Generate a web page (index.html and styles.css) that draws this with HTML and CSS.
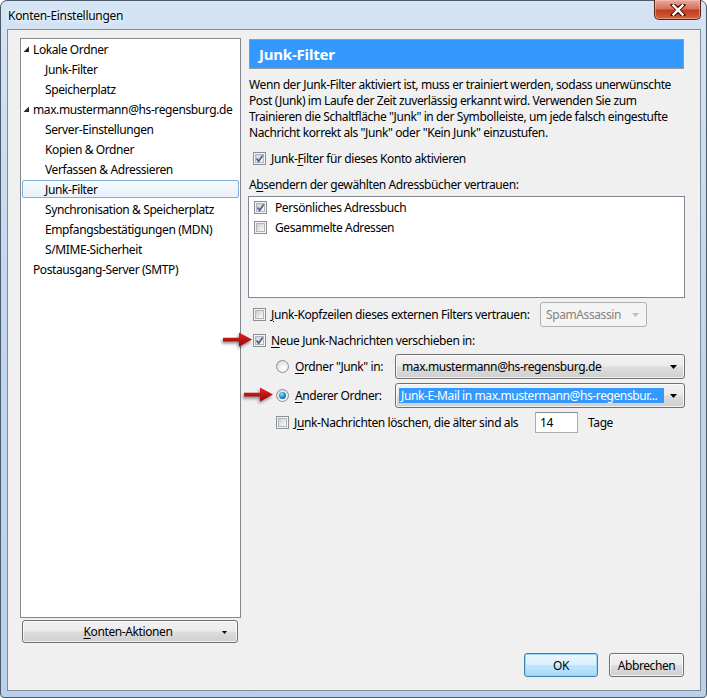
FILE: index.html
```html
<!DOCTYPE html>
<html lang="de">
<head>
<meta charset="utf-8">
<title>Konten-Einstellungen</title>
<link rel="stylesheet" href="styles.css">
</head>
<body>
<div class="window">
  <div class="titlebar">
    <span class="title">Konten-Einstellungen</span>
    <div class="close-btn">
      <svg width="16" height="12" viewBox="0 0 16 12"><path d="M3 1 L8 5 L13 1 M3 11 L8 7 L13 11 M3 1 L13 11 M13 1 L3 11" stroke="#4a1408" stroke-width="4.2" stroke-linecap="square" fill="none"/><path d="M3.5 1.5 L12.5 10.5 M12.5 1.5 L3.5 10.5" stroke="#ffffff" stroke-width="2.4" stroke-linecap="square" fill="none"/></svg>
    </div>
  </div>
  <div class="client">
    <div class="main">
      <div class="left">
        <div class="tree">
          <div class="trow top"><svg class="twisty" width="7" height="7" viewBox="0 0 7 7"><polygon points="6,0.5 6,6 0.5,6" fill="#262626"/></svg>Lokale Ordner</div>
          <div class="trow child">Junk-Filter</div>
          <div class="trow child">Speicherplatz</div>
          <div class="trow top"><svg class="twisty" width="7" height="7" viewBox="0 0 7 7"><polygon points="6,0.5 6,6 0.5,6" fill="#262626"/></svg>max.mustermann@hs-regensburg.de</div>
          <div class="trow child">Server-Einstellungen</div>
          <div class="trow child">Kopien &amp; Ordner</div>
          <div class="trow child">Verfassen &amp; Adressieren</div>
          <div class="trow child selected"><span class="sel-box">Junk-Filter</span></div>
          <div class="trow child">Synchronisation &amp; Speicherplatz</div>
          <div class="trow child">Empfangsbestätigungen (MDN)</div>
          <div class="trow child">S/MIME-Sicherheit</div>
          <div class="trow top">Postausgang-Server (SMTP)</div>
        </div>
        <div class="btn actions"><span class="btn-label"><u>K</u>onten-Aktionen</span><svg class="small-arrow" width="5" height="3" viewBox="0 0 5 3"><polygon points="0,0 5,0 2.5,3" fill="#000"/></svg></div>
      </div>
      <div class="right">
        <div class="header">Junk-Filter</div>
        <p class="desc">Wenn der Junk-Filter aktiviert ist, muss er trainiert werden, sodass unerwünschte<br>Post (Junk) im Laufe der Zeit zuverlässig erkannt wird. Verwenden Sie zum<br>Trainieren die Schaltfläche "Junk" in der Symbolleiste, um jede falsch eingestufte<br>Nachricht korrekt als "Junk" oder "Kein Junk" einzustufen.</p>
        <div class="row r-enable">
          <span class="cb checked"><svg viewBox="0 0 13 13" width="13" height="13"><path d="M3.6 6.6 L5.6 9.3 L9.6 3.4" stroke="#4b5f93" stroke-width="1.7" fill="none"/></svg></span>
          <span class="lbl">Junk-<u>F</u>ilter für dieses Konto aktivieren</span>
        </div>
        <div class="row r-label">A<u>b</u>sendern der gewählten Adressbücher vertrauen:</div>
        <div class="listbox">
          <div class="litem">
            <span class="cb checked"><svg viewBox="0 0 13 13" width="13" height="13"><path d="M3.6 6.6 L5.6 9.3 L9.6 3.4" stroke="#4b5f93" stroke-width="1.7" fill="none"/></svg></span>
            <span class="lbl">Persönliches Adressbuch</span>
          </div>
          <div class="litem">
            <span class="cb"></span>
            <span class="lbl">Gesammelte Adressen</span>
          </div>
        </div>
        <div class="row r-headers">
          <span class="cb"></span>
          <span class="lbl hdr"><u>J</u>unk-Kopfzeilen dieses externen Filters vertrauen:</span>
          <div class="combo disabled spam"><span class="combo-text">SpamAssassin</span><svg class="combo-arrow" width="7" height="4" viewBox="0 0 7 4"><polygon points="0,0 7,0 3.5,4" fill="#c0c0c0"/></svg></div>
        </div>
        <div class="row r-move">
          <span class="cb checked"><svg viewBox="0 0 13 13" width="13" height="13"><path d="M3.6 6.6 L5.6 9.3 L9.6 3.4" stroke="#4b5f93" stroke-width="1.7" fill="none"/></svg></span>
          <span class="lbl"><u>N</u>eue Junk-Nachrichten verschieben in:</span>
          <svg class="red-arrow arrow1" width="32" height="18" viewBox="0 0 32 18"><defs><linearGradient id="ra" x1="0" y1="0" x2="0" y2="1"><stop offset="0" stop-color="#e42424"/><stop offset="1" stop-color="#940505"/></linearGradient></defs><path d="M1 6.8 L17 6.8 L17 1.5 L30 8.5 L17 15.5 L17 10.4 L1 10.4 Z" fill="url(#ra)"/></svg>
        </div>
        <div class="row r-radio">
          <span class="radio"></span>
          <span class="rlbl"><u>O</u>rdner "Junk" in:</span>
          <div class="combo wide"><span class="combo-text">max.mustermann@hs-regensburg.de</span><svg class="combo-arrow" width="7" height="4" viewBox="0 0 7 4"><polygon points="0,0 7,0 3.5,4" fill="#000"/></svg></div>
        </div>
        <div class="row r-radio">
          <span class="radio on"><span class="dot"></span></span>
          <span class="rlbl"><u>A</u>nderer Ordner:</span>
          <div class="combo wide"><span class="combo-text hl">Junk-E-Mail in max.mustermann@hs-regensbur...</span><svg class="combo-arrow" width="7" height="4" viewBox="0 0 7 4"><polygon points="0,0 7,0 3.5,4" fill="#000"/></svg></div>
          <svg class="red-arrow arrow2" width="32" height="18" viewBox="0 0 32 18"><path d="M1 6.8 L17 6.8 L17 1.5 L30 8.5 L17 15.5 L17 10.4 L1 10.4 Z" fill="url(#ra)"/></svg>
        </div>
        <div class="row r-delete">
          <span class="cb"></span>
          <span class="lbl dl">J<u>u</u>nk-Nachrichten löschen, die älter sind als</span>
          <span class="numbox">14</span>
          <span class="tage">Tage</span>
        </div>
      </div>
    </div>
    <div class="footer">
      <div class="btn ok">OK</div>
      <div class="btn cancel">Abbrechen</div>
    </div>
  </div>
</div>
</body>
</html>
```

FILE: styles.css
```css
html, body {
  margin: 0;
  padding: 0;
  background: #ffffff;
}
body {
  font-family: "Noto Sans", "Open Sans", sans-serif;
  font-size: 12px;
  letter-spacing: -0.4px;
  color: #000;
}
u { text-decoration: underline; text-underline-offset: 2px; }

.window {
  width: 707px;
  height: 698px;
  box-sizing: border-box;
  padding: 29px 6px 7px 7px;
  position: relative;
  border-radius: 7px 7px 4px 4px;
  border: 1px solid #4b5a6b;
  background: linear-gradient(180deg, #d5e4f4 0%, #c3d8ee 40%, #b9d0ea 100%);
}
.titlebar {
  position: absolute;
  left: 0; top: 0; right: 0;
  height: 28px;
  display: flex;
  align-items: center;
}
.title {
  margin-left: 7px;
  margin-top: 1px;
  font-size: 12px;
  letter-spacing: -0.3px;
  text-shadow: 0 0 6px #f4f8fc, 0 0 3px #f4f8fc;
}
.close-btn {
  position: absolute;
  top: -1px;
  right: 5px;
  width: 47px;
  height: 20px;
  box-sizing: border-box;
  border: 1px solid #5c2016;
  border-top: none;
  border-radius: 0 0 5px 5px;
  background: linear-gradient(180deg, #e9a99b 0%, #d7725f 45%, #c23b1f 55%, #d4613f 100%);
  box-shadow: inset 0 0 0 1px rgba(255,200,190,0.5);
  display: flex;
  align-items: center;
  justify-content: center;
}

.client {
  width: 694px;
  height: 662px;
  box-sizing: border-box;
  margin-top: -1px;
  margin-left: -1px;
  border: 1px solid #7f8c99;
  background: #f0f0f0;
  display: flex;
  flex-direction: column;
}
.main {
  display: flex;
  padding: 8px 0 0 12px;
  gap: 7px;
}
.left {
  width: 221px;
  display: flex;
  flex-direction: column;
}
.tree {
  height: 580px;
  box-sizing: border-box;
  border: 1px solid #828790;
  background: #fff;
}
.trow {
  height: 20px;
  display: flex;
  align-items: center;
  white-space: nowrap;
  box-sizing: border-box;
}
.trow.top { padding-left: 12px; position: relative; }
.trow.top .twisty { position: absolute; left: 2px; top: 7px; }
.trow.child { padding-left: 24px; }
.trow.selected { padding: 1px 1px; }
.sel-box {
  flex: 1;
  height: 18px;
  box-sizing: border-box;
  border: 1px solid #84acdd;
  border-radius: 2px;
  background: linear-gradient(180deg, #f6fafe 0%, #e8f1fc 100%);
  padding-left: 22px;
  display: flex;
  align-items: center;
}

.btn {
  box-sizing: border-box;
  border: 1px solid #707070;
  border-radius: 3px;
  background: linear-gradient(180deg, #f2f2f2 0%, #ebebeb 48%, #dddddd 52%, #cfcfcf 100%);
  box-shadow: inset 0 0 0 1px rgba(255,255,255,0.7);
  display: flex;
  align-items: center;
  justify-content: center;
  position: relative;
}
.actions {
  margin: 2px 0 0 2px;
  width: 216px;
  height: 23px;
}
.actions .btn-label { margin-right: 4px; }
.small-arrow { position: absolute; right: 10px; top: 10px; }

.right {
  width: 437px;
  padding-top: 1px;
}
.header {
  margin: 0 1px;
  height: 30px;
  box-sizing: border-box;
  border: 1px solid #9a9a9a;
  background: #3399ff;
  color: #fff;
  font-weight: bold;
  font-size: 15px;
  letter-spacing: -0.2px;
  padding-left: 9px;
  display: flex;
  align-items: center;
}
.desc {
  margin: 8px 0 0 1px;
  line-height: 16px;
  white-space: nowrap;
}
.row {
  display: flex;
  align-items: center;
  white-space: nowrap;
  position: relative;
}
.r-enable { height: 20px; margin-top: 7px; padding-left: 5px; }
.r-label { height: 16px; margin-top: 8px; padding-left: 1px; }
.cb {
  width: 13px;
  height: 13px;
  box-sizing: border-box;
  border: 1px solid #8e8f8f;
  background: #f4f4f4;
  position: relative;
  flex: none;
}
.cb::before {
  content: "";
  position: absolute;
  left: 1px; top: 1px;
  width: 9px; height: 9px;
  box-sizing: border-box;
  border: 1px solid #b1b6bc;
  background: linear-gradient(135deg, #cbd0d6 0%, #e6e8eb 55%, #f8f8f8 100%);
}
.cb svg { position: absolute; left: -1px; top: -1px; }
.lbl { margin-left: 5px; }

.listbox {
  margin-top: 4px;
  height: 102px;
  box-sizing: border-box;
  border: 1px solid #828790;
  background: #fff;
}
.litem {
  height: 20px;
  display: flex;
  align-items: center;
  padding-left: 5px;
}
.litem .lbl { margin-left: 8px; }

.r-headers { height: 26px; margin-top: 3px; padding-left: 5px; }
.lbl.hdr { width: 257px; }
.combo {
  box-sizing: border-box;
  height: 25px;
  border: 1px solid #707070;
  border-radius: 3px;
  background: linear-gradient(180deg, #f2f2f2 0%, #ebebeb 48%, #dddddd 52%, #cfcfcf 100%);
  box-shadow: inset 0 0 0 1px rgba(255,255,255,0.7);
  display: flex;
  align-items: center;
  position: relative;
}
.combo-arrow { position: absolute; right: 7px; top: 10px; }
.combo.disabled {
  border-color: #adb2b5;
  background: #f4f4f4;
  color: #838383;
  box-shadow: none;
}
.spam { margin-left: 12px; width: 107px; }
.spam .combo-text { margin-left: 5px; }
.r-move { height: 20px; margin-top: 3px; padding-left: 5px; }
.r-radio { height: 25px; margin-top: 4px; padding-left: 28px; }
.radio {
  width: 13px;
  height: 13px;
  box-sizing: border-box;
  border-radius: 50%;
  border: 1px solid #8b8f94;
  background: radial-gradient(circle at 60% 65%, #ffffff 0%, #f0f0f0 40%, #c9cdd2 100%);
  flex: none;
  position: relative;
}
.radio.on .dot {
  position: absolute;
  left: 2px; top: 2px;
  width: 7px; height: 7px;
  border-radius: 50%;
  background: radial-gradient(circle at 40% 35%, #9fe6ff 0%, #2a9be0 40%, #0a3f78 100%);
}
.rlbl { margin-left: 6px; width: 100px; }
.combo.wide { width: 290px; }
.combo.wide .combo-text { margin-left: 6px; }
.combo-text.hl {
  margin-left: 3px !important;
  background: #3399ff;
  color: #fff;
  padding: 0 7px 0 2px;
  height: 15px;
  line-height: 15px;
}
.r-delete { height: 21px; margin-top: 4px; padding-left: 28px; }
.lbl.dl { margin-left: 5px; width: 241px; }
.numbox {
  box-sizing: border-box;
  width: 43px;
  height: 21px;
  border: 1px solid #abadb3;
  border-top-color: #898c95;
  background: #fff;
  padding-left: 4px;
  display: flex;
  align-items: center;
}
.tage { margin-left: 10px; }

.red-arrow {
  position: absolute;
  filter: drop-shadow(-1px 2px 1.5px rgba(0,0,0,0.45));
}
.arrow1 { left: -26px; top: 1px; }
.arrow2 { left: -5px; top: 3px; }

.footer {
  display: flex;
  justify-content: flex-end;
  gap: 11px;
  margin-top: 10px;
  padding-right: 16px;
}
.footer .btn { height: 24px; }
.ok {
  width: 74px;
  border-color: #3c7fb1;
  box-shadow: inset 0 0 0 1px #9fd5f4;
  background: linear-gradient(180deg, #eaf6fd 0%, #d9f0fc 48%, #bee6fd 52%, #a7d9f5 100%);
}
.cancel { width: 75px; }
```
